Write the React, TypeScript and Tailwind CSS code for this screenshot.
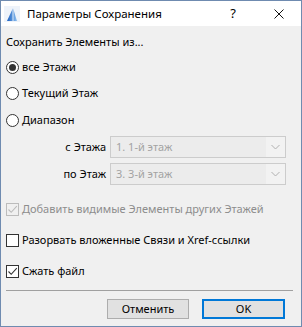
import React from "react";

const font = { fontFamily: '"Noto Sans", "Open Sans", sans-serif' };

function Radio({ checked, label }: { checked?: boolean; label: string }) {
  return (
    <div className="flex items-center h-[20px]">
      <div className="w-[13px] h-[13px] rounded-full border border-[#333333] bg-white flex items-center justify-center">
        {checked && <div className="w-[7px] h-[7px] rounded-full bg-[#333333]" />}
      </div>
      <span className="ml-[3px] text-[11px] text-black">{label}</span>
    </div>
  );
}

function Check({ checked, disabled, label }: { checked?: boolean; disabled?: boolean; label: string }) {
  const stroke = disabled ? "#bcbcbc" : "#333333";
  return (
    <div className="flex items-center h-[20px]">
      <div
        className={
          disabled
            ? "w-[13px] h-[13px] border border-[#bcbcbc] bg-[#f0f0f0] flex items-center justify-center"
            : "w-[13px] h-[13px] border border-[#333333] bg-white flex items-center justify-center"
        }
      >
        {checked && (
          <svg width="11" height="11" viewBox="0 0 11 11">
            <path d="M1.5 5.5 L4.2 8.3 L9.8 2.2" fill="none" stroke={stroke} strokeWidth="1.1" />
          </svg>
        )}
      </div>
      <span className={disabled ? "ml-[3px] text-[11px] text-[#8d8d8d]" : "ml-[3px] text-[11px] text-black"}>
        {label}
      </span>
    </div>
  );
}

function Dropdown({ label, value }: { label: string; value: string }) {
  return (
    <div className="flex items-center h-[22px]">
      <div className="w-[100px] text-right text-[11px] text-black">{label}</div>
      <div className="ml-[4px] w-[176px] h-[22px] border border-[#cccccc] bg-[#f0f0f0] flex items-center">
        <div className="flex-1 h-full bg-[#ececec] flex items-center pl-[5px] text-[11px] text-[#a3a3a3]">
          {value}
        </div>
        <div className="w-[19px] h-full bg-[#f2f2f2] flex items-center justify-center">
          <svg width="9" height="6" viewBox="0 0 9 6">
            <path d="M0.5 1 L4.5 5 L8.5 1" fill="none" stroke="#b0b0b0" strokeWidth="1" />
          </svg>
        </div>
      </div>
    </div>
  );
}

export default function App() {
  return (
    <div
      className="w-[302px] h-[327px] border border-[#6f8bb0] bg-[#f0f0f0] flex flex-col"
      style={font}
    >
      {/* Title bar */}
      <div className="h-[25px] bg-white flex items-center">
        <div className="ml-[3px] w-[16px] h-[16px] bg-[#eef3fa] flex items-end justify-center">
          <svg width="14" height="15" viewBox="0 0 14 15">
            <defs>
              <linearGradient id="g" x1="0" y1="0" x2="1" y2="0">
                <stop offset="0" stopColor="#1a5fc0" />
                <stop offset="1" stopColor="#8ec0f0" />
              </linearGradient>
            </defs>
            <path d="M2 14 L8 1 L12 14 Z" fill="url(#g)" />
            <path d="M8 1 L8 14" stroke="#ffffff" strokeWidth="0.8" />
          </svg>
        </div>
        <span className="ml-[7px] text-[11.5px] text-black">Параметры Сохранения</span>
        <span className="ml-auto text-[13px] text-black mr-[38px]">?</span>
        <svg className="mr-[17px]" width="10" height="10" viewBox="0 0 10 10">
          <path d="M0.5 0.5 L9.5 9.5 M9.5 0.5 L0.5 9.5" stroke="#111111" strokeWidth="1" />
        </svg>
      </div>

      {/* Content */}
      <div className="px-[5px] flex flex-col">
        <div className="mt-[6px] h-[20px] flex items-center text-[11px] text-black">
          Сохранить Элементы из...
        </div>
        <div className="mt-[5px]">
          <Radio checked label="все Этажи" />
        </div>
        <div className="mt-[6px]">
          <Radio label="Текущий Этаж" />
        </div>
        <div className="mt-[7px]">
          <Radio label="Диапазон" />
        </div>
        <div className="mt-[6px]">
          <Dropdown label="с Этажа" value="1. 1-й этаж" />
        </div>
        <div className="mt-[5px]">
          <Dropdown label="по Этаж" value="3. 3-й этаж" />
        </div>
        <div className="mt-[14px]">
          <Check checked disabled label="Добавить видимые Элементы других Этажей" />
        </div>
        <div className="mt-[11px]">
          <Check label="Разорвать вложенные Связи и Xref-ссылки" />
        </div>
        <div className="mt-[11px]">
          <Check checked label="Сжать файл" />
        </div>
        <div className="mt-[9px] h-[1px] w-[287px] bg-[#a0a0a0]" />
        <div className="mt-[8px] flex">
          <button className="ml-[101px] w-[82px] h-[20px] bg-[#e1e1e1] border border-[#adadad] text-[11px] text-black flex items-center justify-center">
            Отменить
          </button>
          <button className="ml-[13px] w-[83px] h-[20px] bg-[#e1e1e1] border-2 border-[#0078d7] text-[11px] text-black flex items-center justify-center">
            OK
          </button>
        </div>
      </div>
    </div>
  );
}
